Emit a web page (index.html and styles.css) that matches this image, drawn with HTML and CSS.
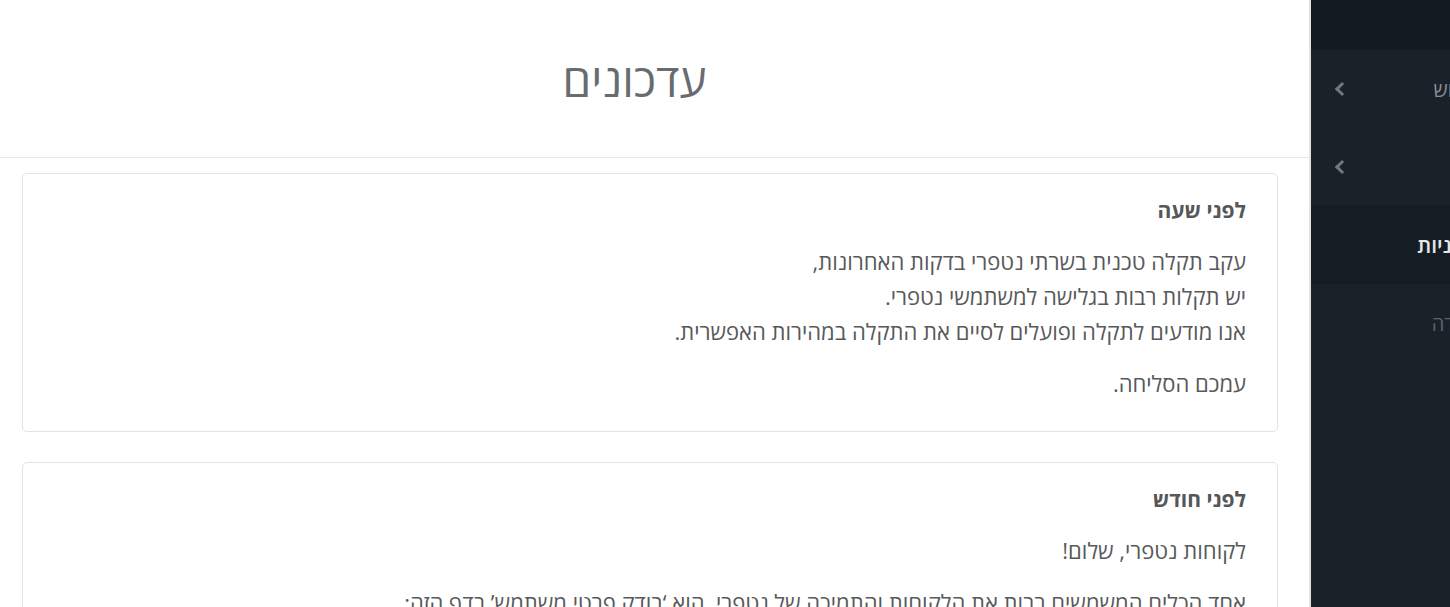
FILE: index.html
```html
<!DOCTYPE html>
<html lang="he">
<head>
<meta charset="utf-8">
<title>עדכונים</title>
<link rel="stylesheet" href="styles.css">
</head>
<body>
<div class="layout">
  <main class="main" dir="rtl">
    <header class="page-header">
      <h1 class="page-title">עדכונים</h1>
    </header>
    <section class="updates">
      <article class="card">
        <h2 class="card-title">לפני שעה</h2>
        <p class="card-text">עקב תקלה טכנית בשרתי נטפרי בדקות האחרונות,<br>יש תקלות רבות בגלישה למשתמשי נטפרי.<br>אנו מודעים לתקלה ופועלים לסיים את התקלה במהירות האפשרית.</p>
        <p class="card-text">עמכם הסליחה.</p>
      </article>
      <article class="card">
        <h2 class="card-title">לפני חודש</h2>
        <p class="card-text">לקוחות נטפרי, שלום!</p>
        <p class="card-text">אחד הכלים המשמשים רבות את הלקוחות והתמיכה של נטפרי. הוא ‘בודק פרטי משתמש’ בדף הזה:</p>
        <p class="card-text">&nbsp;</p>
      </article>
    </section>
  </main>
  <aside class="sidebar">
    <div class="sidebar-inner" dir="rtl">
      <div class="sidebar-top"></div>
      <ul class="nav">
        <li class="nav-item"><span class="nav-label">חיפוש</span><span class="chev"></span></li>
        <li class="nav-item"><span class="nav-label">בית</span><span class="chev"></span></li>
        <li class="nav-item active"><span class="nav-label">מדיניות</span></li>
        <li class="nav-item dim"><span class="nav-label">הורדה</span></li>
      </ul>
    </div>
  </aside>
</div>
</body>
</html>
```

FILE: styles.css
```css
html, body {
  margin: 0;
  padding: 0;
  height: 100%;
  overflow: hidden;
  background: #ffffff;
  font-family: "Open Sans", "Noto Sans", "DejaVu Sans", sans-serif;
}

.layout {
  display: flex;
  height: 100%;
}

.main {
  width: 1309px;
  flex: none;
  border-right: 2px solid #e2e2e2;
  overflow: hidden;
}

.page-header {
  height: 158px;
  border-bottom: 1px solid #e6e6e6;
  display: flex;
  align-items: center;
  justify-content: center;
  padding-right: 40px;
  box-sizing: border-box;
}

.page-title {
  margin: 0;
  font-size: 46px;
  font-weight: 400;
  color: #696c6f;
}

.updates {
  display: flex;
  flex-direction: column;
  gap: 30px;
  padding: 15px 31px 0 22px;
}

.card {
  border: 1px solid #e3e3e3;
  border-radius: 5px;
  padding: 22px 31px 30px 31px;
}

.card-title {
  margin: 0 0 20px;
  font-size: 21px;
  font-weight: 700;
  color: #555759;
  line-height: 28px;
}

.card-text {
  margin: 0 0 17px;
  font-size: 22px;
  line-height: 35px;
  color: #58595b;
}

.card-text:last-child {
  margin-bottom: 0;
}

.sidebar {
  flex: 1;
  background: #1b2129;
  overflow: hidden;
}

.sidebar-inner {
  width: 201px;
}

.sidebar-top {
  height: 50px;
  background: #141a21;
}

.nav {
  list-style: none;
  margin: 0;
  padding: 0;
}

.nav-item {
  height: 78px;
  display: flex;
  align-items: center;
  justify-content: space-between;
  padding: 0 30px 0 26px;
  font-size: 20px;
  color: #8a8f95;
}

.nav-item.active {
  background: #161c23;
  color: #e4e6e8;
  font-weight: 600;
  font-size: 21px;
}

.nav-item.dim {
  color: #5d636a;
}

.chev {
  width: 7px;
  height: 7px;
  border-left: 3px solid #737880;
  border-bottom: 3px solid #737880;
  transform: rotate(45deg);
}
```
